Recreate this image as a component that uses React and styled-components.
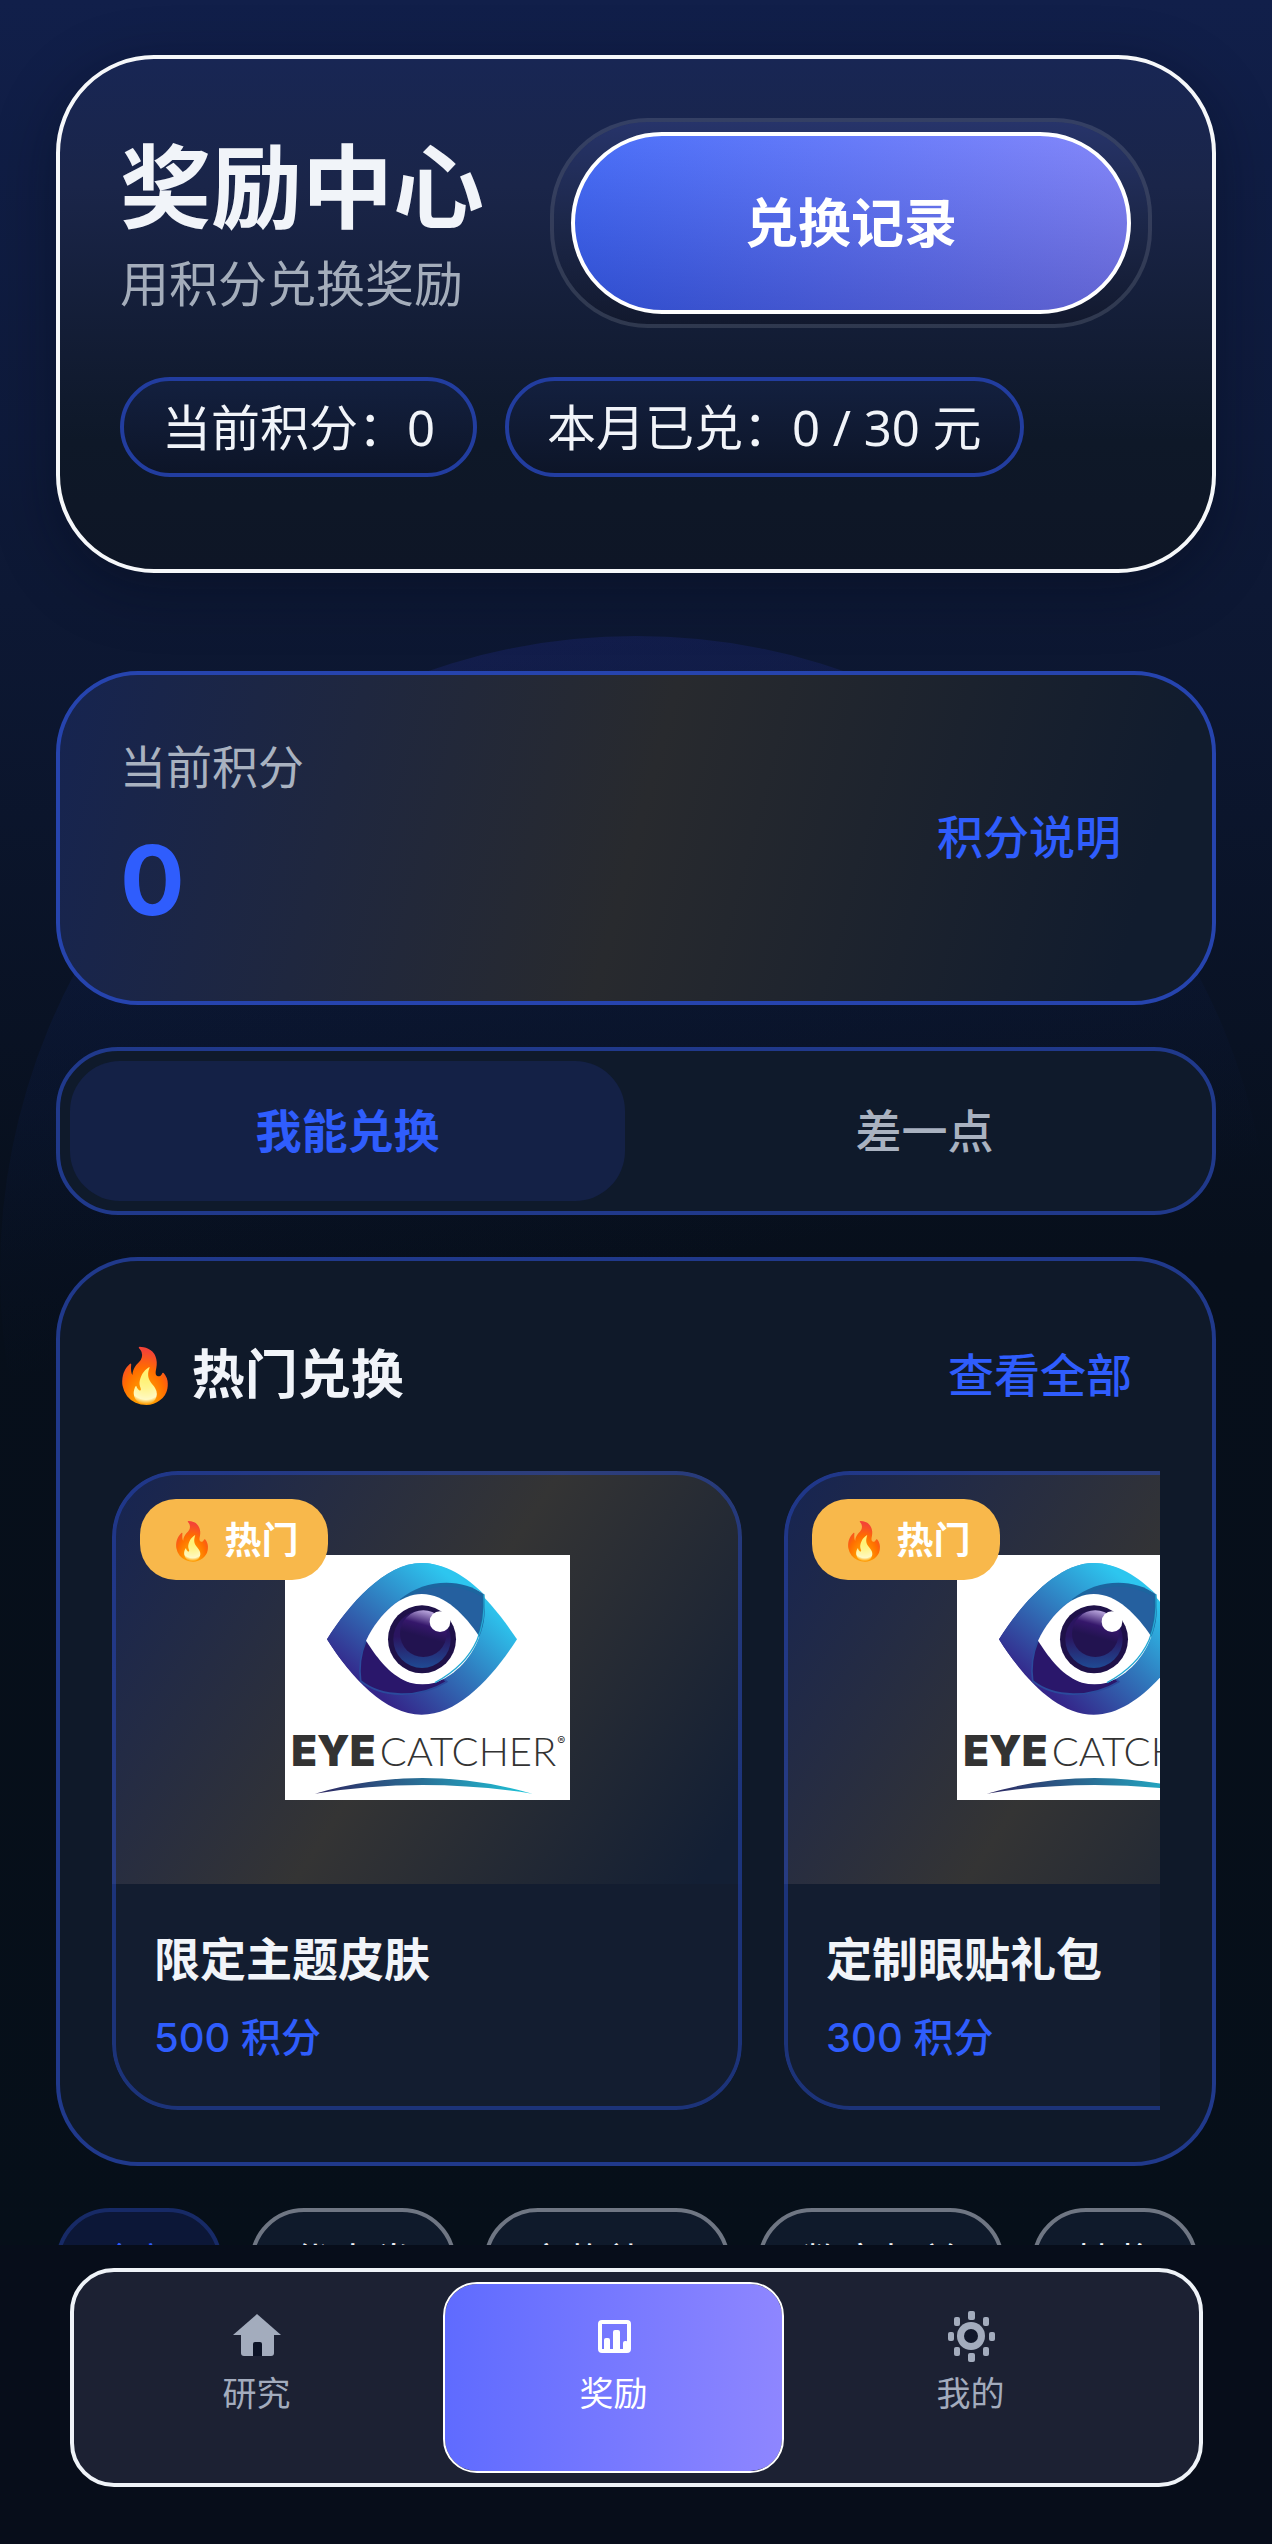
import React, { useState } from 'react';
import styled, { createGlobalStyle } from 'styled-components';

const GlobalStyle = createGlobalStyle`
    * {
        box-sizing: border-box;
    }
    body {
        margin: 0;
        background: #070d1a;
        color: #f1f4f9;
        font-family: "Noto Sans", "Noto Sans CJK SC", sans-serif;
    }
    button {
        border: 0;
        padding: 0;
        background: none;
        color: inherit;
        font: inherit;
        cursor: pointer;
    }
    h1, h2, h3, p {
        margin: 0;
    }
`

const Page = styled.div`
    height: 100vh;
    display: flex;
    flex-direction: column;
`

const Content = styled.main`
    position: relative;
    flex: 1;
    min-height: 0;
    overflow: hidden;
    padding: 55px 56px 0;
    background: linear-gradient(180deg, #111f4a 0, #0d1834 600px, #070f1b 1260px, #060f19 100%);
`

/* big faded disc behind the cards */
const Glow = styled.div`
    position: absolute;
    top: 636px;
    left: 0;
    width: 100%;
    aspect-ratio: 1;
    border-radius: 50%;
    background: linear-gradient(170deg, rgba(40, 48, 160, 0.28), rgba(20, 46, 130, 0.14) 25%, rgba(20, 50, 130, 0) 50%);
`

const Stack = styled.div`
    position: relative;
    display: flex;
    flex-direction: column;
    gap: 42px;
`

const Header = styled.header`
    min-height: 518px;
    margin-bottom: 56px;
    padding: 59px 60px;
    border: 4px solid #f6f8fa;
    border-radius: 98px;
    background: linear-gradient(180deg, #182654 0%, #1a2549 25%, #121c33 58%, #0e1828 75%, #0e1626 100%);
    box-shadow: 0 16px 60px rgba(4, 10, 26, 0.4);
`

const HeaderTop = styled.div`
    display: flex;
    justify-content: space-between;
    align-items: flex-start;
`

const Heading = styled.div`
    padding-top: 15px;
`

const Title = styled.h1`
    font-size: 91px;
    line-height: 106px;
    font-weight: 700;
`

const Subtitle = styled.p`
    margin-top: 8px;
    font-size: 49px;
    line-height: 72px;
    color: #a4adbb;
`

const RecordRing = styled.div`
    width: 602px;
    padding: 10px 17px;
    border: 4px solid rgba(255, 255, 255, 0.12);
    border-radius: 98px;
    background: linear-gradient(180deg, #27346a, #1c2749 50%, #12192e);
    background-clip: padding-box;
`

const RecordButton = styled.button`
    width: 100%;
    height: 182px;
    padding-bottom: 6px;
    border: 4px solid #fff;
    border-radius: 91px;
    background:
        linear-gradient(180deg, rgba(255, 255, 255, 0.1), rgba(0, 0, 40, 0.2)),
        linear-gradient(100deg, #365ff8, #7a7cfa);
    color: #fff;
    font-size: 53px;
    font-weight: 700;
`

const Stats = styled.div`
    display: flex;
    gap: 28px;
    margin-top: 49px;
`

const Stat = styled.span`
    padding: 0 38px;
    border: 4px solid #223d9f;
    border-radius: 50px;
    background: linear-gradient(180deg, #13203f, #0d1528);
    font-size: 49px;
    line-height: 92px;
    white-space: nowrap;
`

const Points = styled.section`
    display: flex;
    justify-content: space-between;
    align-items: center;
    min-height: 334px;
    padding: 0 91px 5px 60px;
    border: 4px solid #2644ae;
    border-radius: 82px;
    background: linear-gradient(105deg, #162450, #282a2e 50%, #111c2e 92%);
`

const PointsLabel = styled.p`
    font-size: 46px;
    line-height: 64px;
    color: #a9b2c0;
`

const PointsValue = styled.p`
    margin-top: 24px;
    font-family: Inter, sans-serif;
    font-size: 96px;
    line-height: 116px;
    font-weight: 700;
    color: #2f5dfd;
`

const TextButton = styled.button`
    color: #2f5dfd;
    font-size: 46px;
    line-height: 64px;
    font-weight: 500;
`

const Tabs = styled.div`
    display: grid;
    grid-template-columns: 1fr 1fr;
    gap: 22px;
    padding: 10px;
    border: 4px solid #20398b;
    border-radius: 62px;
    background: #0f1a2b;
`

const Tab = styled.button`
    height: 140px;
    padding-bottom: 6px;
    border-radius: 50px;
    background: ${props => props.$active ? '#142146' : 'none'};
    color: ${props => props.$active ? '#2f5dfd' : '#a9b2c0'};
    font-size: 46px;
    font-weight: ${props => props.$active ? 700 : 500};
`

const Hot = styled.section`
    padding: 75px 52px 52px;
    border: 4px solid #20398b;
    border-radius: 82px;
    background: #0f1929;
`

const HotHead = styled.div`
    display: flex;
    justify-content: space-between;
    align-items: center;
    padding: 0 28px 0 0;
`

const HotTitle = styled.h2`
    font-size: 53px;
    line-height: 76px;
    font-weight: 700;
`

const Scroller = styled.div`
    display: flex;
    gap: 42px;
    margin-top: 59px;
    overflow: hidden;
`

const Item = styled.article`
    position: relative;
    flex: 0 0 630px;
    overflow: hidden;
    border-radius: 66px;
    background: #131d30;

    &::after {
        content: '';
        position: absolute;
        inset: 0;
        border: 4px solid rgba(40, 75, 200, 0.48);
        border-radius: 66px;
        pointer-events: none;
    }
`

const Cover = styled.div`
    display: flex;
    align-items: center;
    justify-content: center;
    height: 413px;
    background: linear-gradient(123deg, #162452, #343434 50%, #131f34 95%);
`

const Badge = styled.span`
    position: absolute;
    top: 28px;
    left: 28px;
    padding: 0 29px;
    border-radius: 36px;
    background: #f8b84b;
    color: #fff;
    font-size: 37px;
    line-height: 81px;
    font-weight: 700;
`

const ItemBody = styled.div`
    padding: 41px 42px 43px;
`

const ItemTitle = styled.h3`
    font-size: 46px;
    line-height: 66px;
    font-weight: 700;
`

const Price = styled.p`
    margin-top: 18px;
    font-family: Inter, "Noto Sans CJK SC", sans-serif;
    font-size: 40px;
    line-height: 58px;
    font-weight: 500;
    color: #2f5dfd;
`

const Filters = styled.div`
    display: flex;
    gap: 28px;
`

const Filter = styled.button`
    padding: 0 39px;
    border: 4px solid ${props => props.$active ? '#172a66' : '#6f7683'};
    border-radius: 54px;
    background: ${props => props.$active ? '#0c1737' : '#0f1a2b'};
    color: ${props => props.$active ? '#2f5dfd' : '#f1f4f9'};
    font-size: 40px;
    line-height: 100px;
    white-space: nowrap;
`

const Bottom = styled.footer`
    padding: 23px 69px 57px 70px;
`

const Nav = styled.nav`
    display: grid;
    grid-template-columns: repeat(3, 1fr);
    gap: 16px;
    padding: 10px 58px 10px 12px;
    border: 4px solid #eff3f8;
    border-radius: 44px;
    background: #1c2133;
`

const NavItem = styled.a`
    display: flex;
    flex-direction: column;
    align-items: center;
    height: 191px;
    padding-top: 22px;
    border: 2px solid ${props => props.$active ? '#fff' : 'transparent'};
    border-radius: 34px;
    background: ${props => props.$active ? 'linear-gradient(90deg, #5f6bff, #8e86ff) padding-box' : 'none'};
    color: ${props => props.$active ? '#fff' : '#a3acbd'};
    font-size: 34px;
    line-height: 50px;
    text-decoration: none;

    svg {
        width: 60px;
        height: 60px;
        margin-bottom: 2px;
    }
`

const HomeIcon = () => (
    <svg viewBox="0 0 60 60" aria-hidden="true">
        <path d="M30 8 L54 29 H6 Z" fill="currentColor" />
        <path d="M14 29 H47 V47 Q47 50 44 50 H17 Q14 50 14 47 Z" fill="currentColor" />
        <path d="M26 50 V38 Q26 36 28 36 H33 Q35 36 35 38 V50 Z" fill="#0c1326" />
    </svg>
)

const ChartIcon = () => (
    <svg viewBox="0 0 60 60" aria-hidden="true">
        <rect x="16" y="16" width="29" height="29" rx="2" fill="none" stroke="currentColor" strokeWidth="4" />
        <rect x="20" y="32" width="6" height="13" rx="2" fill="currentColor" />
        <rect x="29" y="24" width="7" height="21" rx="2" fill="currentColor" />
        <rect x="39" y="35" width="5" height="10" rx="2" fill="currentColor" />
    </svg>
)

const rays = [[27, 5], [27, 47], [7, 26], [48, 26], [13, 11], [42, 11], [13, 41], [42, 41]]

const SunIcon = () => (
    <svg viewBox="0 0 60 60" aria-hidden="true">
        <circle cx="30" cy="30" r="14" fill="currentColor" />
        <circle cx="30" cy="30" r="7" fill="#11182b" />
        {rays.map(([x, y]) => (
            <rect key={x + '-' + y} x={x} y={y} width={x === 27 ? 7 : 6} height="9" rx="2" fill="currentColor" />
        ))}
    </svg>
)

const Logo = styled.svg`
    width: 285px;
    height: 245px;
    background: #fff;
`

const EyeLogo = ({ id }) => (
    <Logo viewBox="0 0 855 735" role="img" aria-label="Eyecatcher">
        <defs>
            <linearGradient id={id + 'left'} gradientUnits="userSpaceOnUse" x1="190" y1="360" x2="450" y2="30">
                <stop offset="0" stopColor="#34268a" />
                <stop offset="0.5" stopColor="#3076bb" />
                <stop offset="1" stopColor="#2dc6ef" />
            </linearGradient>
            <linearGradient id={id + 'right'} gradientUnits="userSpaceOnUse" x1="350" y1="480" x2="640" y2="180">
                <stop offset="0" stopColor="#34268a" />
                <stop offset="0.55" stopColor="#3079bd" />
                <stop offset="1" stopColor="#2dc2ec" />
            </linearGradient>
            <linearGradient id={id + 'iris'} x1="0" y1="0" x2="0" y2="1">
                <stop offset="0.45" stopColor="#2a1560" />
                <stop offset="1" stopColor="#1f4a93" />
            </linearGradient>
            <linearGradient id={id + 'shine'} x1="0.55" y1="0" x2="0.4" y2="0.55">
                <stop offset="0" stopColor="#b9a6dd" />
                <stop offset="0.55" stopColor="#35176b" />
                <stop offset="1" stopColor="#221350" />
            </linearGradient>
            <linearGradient id={id + 'arc'} x1="0" y1="0" x2="1" y2="0">
                <stop offset="0" stopColor="#2d2560" />
                <stop offset="0.45" stopColor="#2a6a92" />
                <stop offset="1" stopColor="#1fc6da" />
            </linearGradient>
        </defs>
        <path d="M126 253 C190 150 300 24 410 24 C520 24 620 140 696 253 C620 370 520 479 410 479 C300 479 200 370 126 253Z" fill={`url(#${id}right)`} />
        <path d="M126 253 C190 150 300 24 410 24 C480 24 545 65 597 118 C530 70 420 70 345 133 C290 170 222 250 227 378 C190 345 155 300 126 253Z" fill={`url(#${id}left)`} />
        <path d="M345 133 C420 70 530 68 597 118 C602 165 600 205 583 245 L410 200Z" fill="#1c659f" />
        <path d="M370 126 C440 84 520 84 588 124 C592 165 590 200 578 232 L410 200Z" fill="#25609f" />
        <path d="M243 257 C225 300 222 340 227 378 C290 428 400 432 485 380 L400 300Z" fill="#2a176b" stroke="#2b4a9c" strokeWidth="5" />
        <path d="M243 257 C285 170 350 117 410 117 C480 117 540 180 583 245 C555 320 500 365 450 383 C425 389 400 389 375 383 C320 365 280 315 243 257Z" fill="#fff" />
        <path d="M597 118 C602 205 585 310 450 383" fill="none" stroke="#25a9d4" strokeWidth="4" />
        <circle cx="411" cy="253" r="102" fill="#1f1149" />
        <circle cx="411" cy="253" r="86" fill={`url(#${id}iris)`} />
        <circle cx="415" cy="236" r="70" fill={`url(#${id}shine)`} />
        <circle cx="465" cy="200" r="31" fill="#fff" />
        <text x="19" y="633" fill="#333" fontFamily="Inter, sans-serif" fontWeight="900" fontSize="126">EYE</text>
        <text x="284" y="633" fill="#333" fontFamily="Lato, sans-serif" fontWeight="300" fontSize="120">CATCHER</text>
        <text x="817" y="570" fill="#333" fontFamily="Inter, sans-serif" fontSize="36">®</text>
        <path d="M90 716 Q410 622 742 716 Q410 664 90 716Z" fill={`url(#${id}arc)`} />
    </Logo>
)

const items = [
    { id: 'skin', title: '限定主题皮肤', price: 500 },
    { id: 'gift', title: '定制眼贴礼包', price: 300 }
]

const filters = ['全部', '优惠券', '实物礼品', '数字权益', '抽奖']

const tabs = ['我能兑换', '差一点']

const App = () => {
    const [tab, setTab] = useState(0)
    const [filter, setFilter] = useState(0)

    return (
        <Page>
            <GlobalStyle />
            <Content>
                <Glow />
                <Stack>
                    <Header>
                        <HeaderTop>
                            <Heading>
                                <Title>奖励中心</Title>
                                <Subtitle>用积分兑换奖励</Subtitle>
                            </Heading>
                            <RecordRing>
                                <RecordButton>兑换记录</RecordButton>
                            </RecordRing>
                        </HeaderTop>
                        <Stats>
                            <Stat>当前积分：0</Stat>
                            <Stat>本月已兑：0 / 30 元</Stat>
                        </Stats>
                    </Header>
                    <Points>
                        <div>
                            <PointsLabel>当前积分</PointsLabel>
                            <PointsValue>0</PointsValue>
                        </div>
                        <TextButton>积分说明</TextButton>
                    </Points>
                    <Tabs>
                        {tabs.map((name, i) => (
                            <Tab key={name} $active={tab === i} onClick={() => setTab(i)}>{name}</Tab>
                        ))}
                    </Tabs>
                    <Hot>
                        <HotHead>
                            <HotTitle>🔥 热门兑换</HotTitle>
                            <TextButton>查看全部</TextButton>
                        </HotHead>
                        <Scroller>
                            {items.map(item => (
                                <Item key={item.id}>
                                    <Cover>
                                        <EyeLogo id={item.id} />
                                    </Cover>
                                    <Badge>🔥 热门</Badge>
                                    <ItemBody>
                                        <ItemTitle>{item.title}</ItemTitle>
                                        <Price>{item.price} 积分</Price>
                                    </ItemBody>
                                </Item>
                            ))}
                        </Scroller>
                    </Hot>
                    <Filters>
                        {filters.map((name, i) => (
                            <Filter key={name} $active={filter === i} onClick={() => setFilter(i)}>{name}</Filter>
                        ))}
                    </Filters>
                </Stack>
            </Content>
            <Bottom>
                <Nav>
                    <NavItem href="#research"><HomeIcon />研究</NavItem>
                    <NavItem href="#rewards" $active><ChartIcon />奖励</NavItem>
                    <NavItem href="#me"><SunIcon />我的</NavItem>
                </Nav>
            </Bottom>
        </Page>)
}

export default App;
